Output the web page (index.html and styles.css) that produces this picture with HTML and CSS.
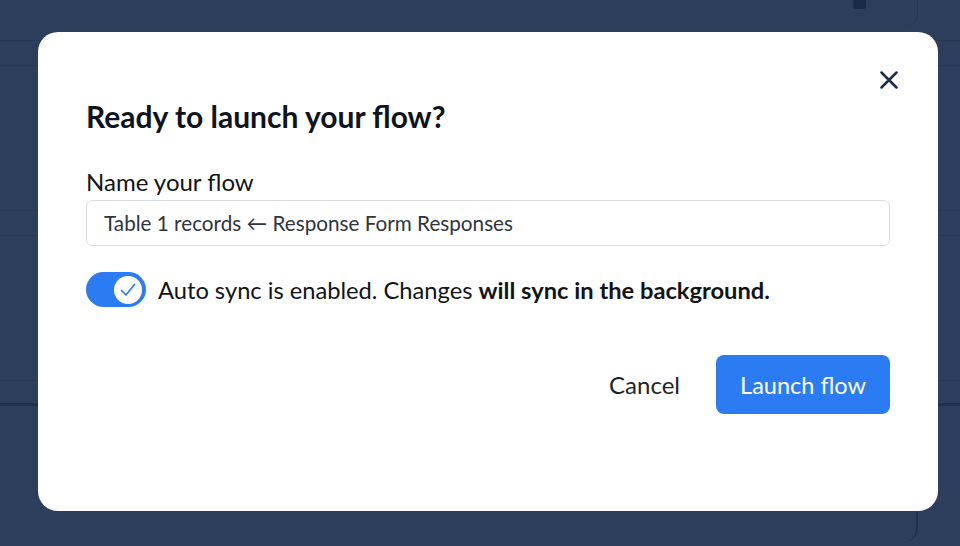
FILE: index.html
```html
<!DOCTYPE html>
<html lang="en">
<head>
<meta charset="utf-8">
<title>Launch flow</title>
<link rel="stylesheet" href="styles.css">
</head>
<body>
<div class="app">
  <div class="bg-top">
    <div class="bg-top-fill"></div>
    <div class="bg-panel">
      <span class="bg-handle"></span>
    </div>
  </div>
  <div class="bg-rows">
    <div class="bg-row short"></div>
    <div class="bg-row tall"></div>
    <div class="bg-row short"></div>
    <div class="bg-row tall"></div>
    <div class="bg-row short last"></div>
  </div>
  <div class="bg-bottom">
    <div class="bg-bottom-panel"></div>
  </div>
</div>

<div class="modal" role="dialog" aria-labelledby="modal-title">
  <button class="close" aria-label="Close">
    <svg width="18" height="18" viewBox="0 0 18 18"><path d="M1.5 1.5 L16.5 16.5 M16.5 1.5 L1.5 16.5" stroke="#1b2c4c" stroke-width="2.5" stroke-linecap="round" fill="none"/></svg>
  </button>
  <h1 id="modal-title" class="title">Ready to launch your flow?</h1>
  <label class="label" for="flow-name">Name your flow</label>
  <div class="input" id="flow-name">Table 1 records ← Response Form Responses</div>
  <div class="sync">
    <span class="toggle">
      <span class="knob">
        <svg width="18" height="16" viewBox="0 0 18 16"><path d="M2.5 8.5 L7 13 L15.5 2.5" stroke="#2b7bf2" stroke-width="1.7" stroke-linecap="round" stroke-linejoin="round" fill="none"/></svg>
      </span>
    </span>
    <span class="sync-text">Auto sync is enabled. Changes <b>will sync in the background.</b></span>
  </div>
  <div class="actions">
    <button class="btn-cancel">Cancel</button>
    <button class="btn-primary">Launch flow</button>
  </div>
</div>
</body>
</html>
```

FILE: styles.css
```css
* { box-sizing: border-box; }
html, body {
  margin: 0;
  padding: 0;
  width: 960px;
  height: 546px;
  overflow: hidden;
  background: #2c3e5c;
  font-family: Lato, "Noto Sans", sans-serif;
}
.app {
  width: 960px;
  height: 546px;
  display: flex;
  flex-direction: column;
}
.bg-top {
  height: 40px;
  display: flex;
}
.bg-top-fill { flex: 0 0 832px; }
.bg-panel {
  flex: 0 0 86px;
  height: 27px;
  border-right: 1px solid #223656;
  border-bottom-right-radius: 14px;
}
.bg-handle {
  display: block;
  margin-left: 21px;
  width: 13px;
  height: 9px;
  background: #182b4b;
  border-radius: 0 0 3px 3px;
}
.bg-rows {
  display: flex;
  flex-direction: column;
}
.bg-row {
  border-top: 1px solid #253957;
}
.bg-row.short { height: 25px; }
.bg-row.tall { height: 145px; }
.bg-row.last {
  height: 26px;
  border-bottom: 3px solid #1b2f50;
}
.bg-bottom {
  flex: 1;
  display: flex;
  justify-content: flex-start;
}
.bg-bottom-panel {
  width: 918px;
  height: 136px;
  border-right: 2px solid #1d3152;
  border-bottom-right-radius: 14px;
}

.modal {
  position: absolute;
  top: 32px;
  left: 38px;
  width: 900px;
  height: 479px;
  background: #ffffff;
  border-radius: 20px;
  padding: 66px 48px 0 48px;
  display: flex;
  flex-direction: column;
}
.close {
  position: absolute;
  top: 38px;
  right: 39px;
  width: 20px;
  height: 20px;
  padding: 1px;
  border: 0;
  background: none;
  display: flex;
  align-items: center;
  justify-content: center;
}
.title {
  margin: 0;
  font-size: 30px;
  line-height: 36px;
  font-weight: 700;
  color: #0e1420;
}
.label {
  margin-top: 34px;
  font-size: 24px;
  line-height: 28px;
  color: #111418;
}
.input {
  margin-top: 4px;
  height: 46px;
  border: 1px solid #d9dce1;
  border-radius: 6px;
  padding-left: 17px;
  display: flex;
  align-items: center;
  font-size: 20.7px;
  color: #2f3540;
}
.sync {
  margin-top: 26px;
  display: flex;
  align-items: center;
  gap: 12px;
}
.toggle {
  width: 60px;
  height: 35px;
  border-radius: 18px;
  background: #2b7bf2;
  display: flex;
  align-items: center;
  justify-content: flex-end;
  padding-right: 4px;
}
.knob {
  width: 28px;
  height: 28px;
  border-radius: 50%;
  background: #ffffff;
  display: flex;
  align-items: center;
  justify-content: center;
}
.sync-text {
  font-size: 23.7px;
  color: #121418;
}
.sync-text b { font-weight: 700; }
.actions {
  margin-top: 48px;
  display: flex;
  justify-content: flex-end;
  align-items: center;
  gap: 18px;
}
.btn-cancel {
  height: 59px;
  padding: 0 18px;
  border: 0;
  background: none;
  font-family: inherit;
  font-size: 24px;
  color: #1f2329;
}
.btn-primary {
  width: 174px;
  height: 59px;
  border: 0;
  border-radius: 8px;
  background: #2b7bf2;
  color: #ffffff;
  font-family: inherit;
  font-size: 23.5px;
}
```
